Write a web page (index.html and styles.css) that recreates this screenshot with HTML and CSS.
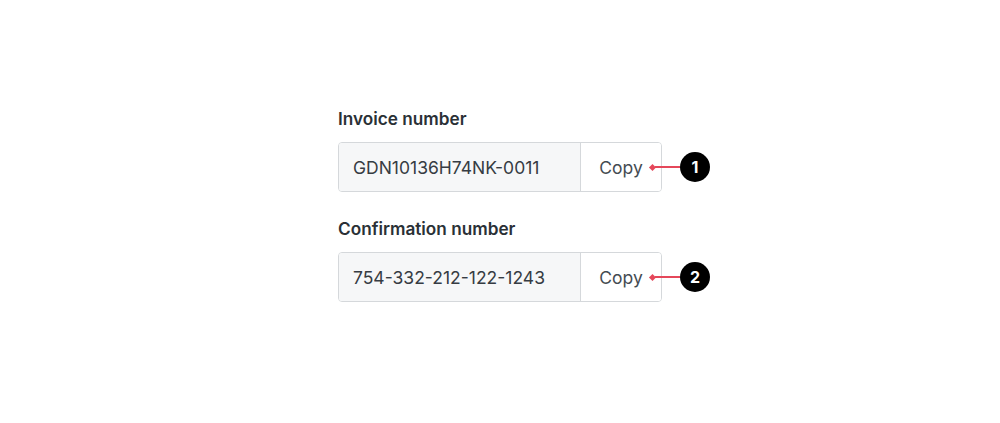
FILE: index.html
```html
<!DOCTYPE html>
<html>
<head>
<meta charset="utf-8">
<link rel="stylesheet" href="styles.css">
</head>
<body>
<main class="form">
  <div class="field">
    <div class="label">Invoice number</div>
    <div class="row">
      <div class="group">
        <div class="value">GDN10136H74NK-0011</div>
        <div class="btn">Copy</div>
      </div>
      <div class="note"><span class="dot"></span><span class="line"></span><span class="badge">1</span></div>
    </div>
  </div>
  <div class="field">
    <div class="label">Confirmation number</div>
    <div class="row">
      <div class="group">
        <div class="value">754-332-212-122-1243</div>
        <div class="btn">Copy</div>
      </div>
      <div class="note"><span class="dot"></span><span class="line"></span><span class="badge">2</span></div>
    </div>
  </div>
</main>
</body>
</html>
```
FILE: styles.css
```css
* { box-sizing: border-box; }
html, body { margin: 0; background: #fff; }
body {
  font-family: Inter, "Liberation Sans", sans-serif;
  color: #2f363d;
  height: 423px;
}
.form {
  width: 324px;
  margin-left: 338px;
  padding-top: 107px;
  display: flex;
  flex-direction: column;
  gap: 25px;
}
.label {
  font-size: 17.2px;
  font-weight: 600;
  line-height: 24px;
  color: #2a3036;
  margin-bottom: 11px;
}
.row { position: relative; }
.group {
  display: flex;
  height: 50px;
  border: 1px solid #d5d8db;
  border-radius: 4px;
  overflow: hidden;
}
.value {
  width: 242px;
  background: #f6f7f8;
  border-right: 1px solid #d5d8db;
  padding-left: 14px;
  display: flex;
  align-items: center;
  font-size: 17.5px;
  color: #363c43;
}
.btn {
  flex: 1;
  background: #fff;
  display: flex;
  align-items: center;
  justify-content: center;
  font-size: 17.5px;
  color: #444b52;
}
.note {
  position: absolute;
  left: 312px;
  top: 10px;
  display: flex;
  align-items: center;
}
.dot {
  width: 5px; height: 5px;
  background: #e5475a;
  transform: rotate(45deg);
}
.line {
  width: 25px;
  height: 1.5px;
  background: #e5475a;
}
.badge {
  width: 30px; height: 30px;
  border-radius: 50%;
  background: #000;
  color: #fff;
  font-weight: 700;
  font-size: 16px;
  display: flex;
  align-items: center;
  justify-content: center;
}
```
